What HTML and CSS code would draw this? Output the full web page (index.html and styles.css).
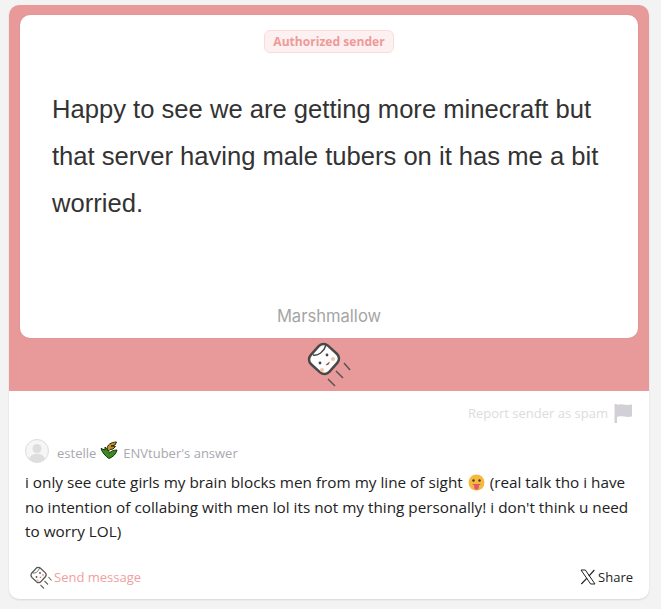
FILE: index.html
```html
<!DOCTYPE html>
<html lang="en">
<head>
    <meta charset="UTF-8">
    <meta name="viewport" content="width=device-width, initial-scale=1.0">
    <title>Marshmallow</title>
    <link rel="stylesheet" href="styles.css">
</head>
<body>
    <div class="card">
        <div class="card-top">
            <div class="message">
                <div class="badge-row"><span class="badge">Authorized sender</span></div>
                <p class="question">Happy to see we are getting more minecraft but that server having male tubers on it has me a bit worried.</p>
                <div class="brand">Marshmallow</div>
            </div>
            <div class="mascot">
                <svg width="48" height="48" viewBox="0 0 48 48">
                    <rect x="6.500" y="7.500" width="25" height="25" rx="6.500" transform="rotate(42 19 20)" fill="#fff" stroke="#484848" stroke-width="2.500"/>
                    <path d="M8 16 C13 17 19 13 21 6" fill="none" stroke="#484848" stroke-width="1.500"/>
                    <circle cx="28" cy="20" r="2" fill="#f6c3a8"/>
                    <circle cx="17" cy="31" r="2" fill="#f6c3a8"/>
                    <circle cx="15" cy="24" r="1.400" fill="#444"/>
                    <circle cx="22" cy="16" r="1.400" fill="#444"/>
                    <path d="M20.500 26 L24.500 22.500 A3 3 0 0 1 20.500 26 Z" fill="#a8483e"/>
                    <path d="M39 24 L45 31 M31 32 L38 39 M23 40 L30 47" stroke="#555" stroke-width="1.500" fill="none"/>
                </svg>
            </div>
        </div>
        <div class="card-bottom">
            <div class="report">
                <span>Report sender as spam</span>
                <svg width="20" height="20" viewBox="0 0 20 20">
                    <path d="M1.500 1 H4 V20 H1.500 Z" fill="#d2d0d6"/>
                    <path d="M4 2 C8 0 11 3 19 1.500 V13.500 C12 15 8 12 4 14 Z" fill="#d2d0d6"/>
                </svg>
            </div>
            <div class="answer-head">
                <svg class="avatar" width="24" height="24" viewBox="0 0 24 24">
                    <circle cx="12" cy="12" r="11.500" fill="#f6f6f6" stroke="#dcdcdc"/>
                    <circle cx="12" cy="9.500" r="4.500" fill="#dedede"/>
                    <path d="M4 20 C6 13 18 13 20 20 A11 11 0 0 1 4 20 Z" fill="#dedede"/>
                </svg>
                <span class="name">estelle</span>
                <svg class="leaf" width="18" height="18" viewBox="0 0 18 18">
                    <path d="M9 17.500 C5 15 2 11 1 7.500 L5 9 L5 6 C7 8 9 10 9.500 12 C11 10 14 9 17 9 C16 13 13 16 9 17.500 Z" fill="#3c8a22" stroke="#16300c" stroke-width="1"/>
                    <path d="M7 8 C7 4 11 1 16.500 1 L15 4 L11 5 L15.500 5.500 L13 8 L10 8.500 L8.500 10 Z" fill="#c2922a" stroke="#30240a" stroke-width="1"/>
                </svg>
                <span>ENVtuber's answer</span>
            </div>
            <p class="answer">i only see cute girls my brain blocks men from my line of sight
                <svg class="emoji" width="17" height="17" viewBox="0 0 17 17">
                    <circle cx="8.500" cy="8.500" r="8" fill="#f5b93e"/>
                    <circle cx="5.500" cy="6.500" r="1.200" fill="#4a3520"/>
                    <circle cx="11.500" cy="6.500" r="1.200" fill="#4a3520"/>
                    <path d="M4 10 H13 C12 11 11 11.300 10.800 11.300 V13.500 A2.300 2.300 0 0 1 6.200 13.500 V11.300 C6 11.300 5 11 4 10 Z" fill="#e2566e"/>
                </svg>
                (real talk tho i have no intention of collabing with men lol its not my thing personally! i don't think u need to worry LOL)</p>
            <div class="actions">
                <div class="send">
                    <svg width="24" height="24" viewBox="0 0 48 48">
                        <rect x="6.500" y="7.500" width="25" height="25" rx="6.500" transform="rotate(42 19 20)" fill="#fff" stroke="#555" stroke-width="2.600"/>
                        <path d="M8 16 C13 17 19 13 21 6" fill="none" stroke="#555" stroke-width="1.600"/>
                        <circle cx="28" cy="20" r="2.400" fill="#f3c0a8"/>
                        <circle cx="17" cy="31" r="2.400" fill="#f3c0a8"/>
                        <circle cx="15" cy="24" r="1.800" fill="#555"/>
                        <circle cx="22" cy="16" r="1.800" fill="#555"/>
                        <path d="M20.500 26 L24.500 22.500 A3 3 0 0 1 20.500 26 Z" fill="#a8483e"/>
                        <path d="M39 24 L45 31 M31 32 L38 39 M23 40 L30 47" stroke="#666" stroke-width="2.200" fill="none"/>
                    </svg>
                    <span>Send message</span>
                </div>
                <div class="share">
                    <svg width="16" height="16" viewBox="0 0 24 24">
                        <path d="M1.500 1.500 H8 L22.500 22.500 H16 Z" fill="#fff" stroke="#222" stroke-width="1.500"/>
                        <path d="M21.500 1.500 L13.300 10.800 M10.500 13.800 L2 22.500" fill="none" stroke="#222" stroke-width="1.800"/>
                    </svg>
                    <span>Share</span>
                </div>
            </div>
        </div>
    </div>
</body>
</html>
```

FILE: styles.css
```css
body {
    margin: 0;
    padding: 5px 12px 10px 9px;
    background-color: #f3f3f3;
    font-family: "Open Sans", sans-serif;
}
.card {
    border-radius: 10px;
    overflow: hidden;
    background-color: white;
    box-shadow: 0 1px 2px rgba(0, 0, 0, 0.12);
}
.card-top {
    background-color: #e89a9a;
    padding: 10px 11px 0;
}
.message {
    background-color: white;
    border-radius: 10px;
    height: 323px;
    display: flex;
    flex-direction: column;
    box-shadow: 0 0 2px rgba(0, 0, 0, 0.1);
}
.badge-row {
    padding-top: 14px;
    text-align: center;
    height: 24px;
}
.badge {
    display: inline-block;
    height: 21px;
    line-height: 21px;
    padding: 0 8px;
    font-size: 12.100px;
    font-weight: 700;
    color: #ee9a9a;
    background-color: #fdf0f0;
    border: 1px solid #fbdcdc;
    border-radius: 6px;
}
.question {
    margin: 0;
    padding: 33px 32px 0;
    flex-grow: 1;
    font-family: "Liberation Sans", Arial, sans-serif;
    font-size: 25.600px;
    line-height: 47px;
    color: #333333;
}
.brand {
    font-family: Inter, sans-serif;
    font-size: 16.600px;
    color: #a5a5a5;
    text-align: center;
    padding-bottom: 12px;
}
.mascot {
    height: 53px;
    display: flex;
    justify-content: center;
    padding-top: 1px;
    box-sizing: border-box;
}
.card-bottom {
    padding: 12px 16px 0;
    height: 208px;
    box-sizing: border-box;
}
.report {
    display: flex;
    justify-content: flex-end;
    align-items: center;
    gap: 5px;
    font-size: 13px;
    color: #dddbe0;
    height: 20px;
}
.answer-head {
    display: flex;
    align-items: center;
    gap: 6px;
    margin-top: 16px;
    font-size: 13px;
    color: #a8a8b0;
}
.name {
    margin-left: 2px;
}
.leaf {
    margin-top: -2px;
    margin-left: -2px;
    margin-right: -1px;
}
.answer-head span {
    padding-top: 3px;
}
.answer {
    margin: 7px 0 0;
    font-size: 15.300px;
    line-height: 24.500px;
    color: #222222;
}
.emoji {
    vertical-align: -3px;
    margin: 0 1px;
}
.actions {
    display: flex;
    justify-content: space-between;
    align-items: center;
    margin-top: 21px;
    padding-left: 4px;
}
.send {
    display: flex;
    align-items: center;
    gap: 1px;
    font-size: 13px;
    color: #f0a0a0;
}
.share {
    display: flex;
    align-items: center;
    gap: 2px;
    font-size: 13px;
    color: #222222;
}
```
